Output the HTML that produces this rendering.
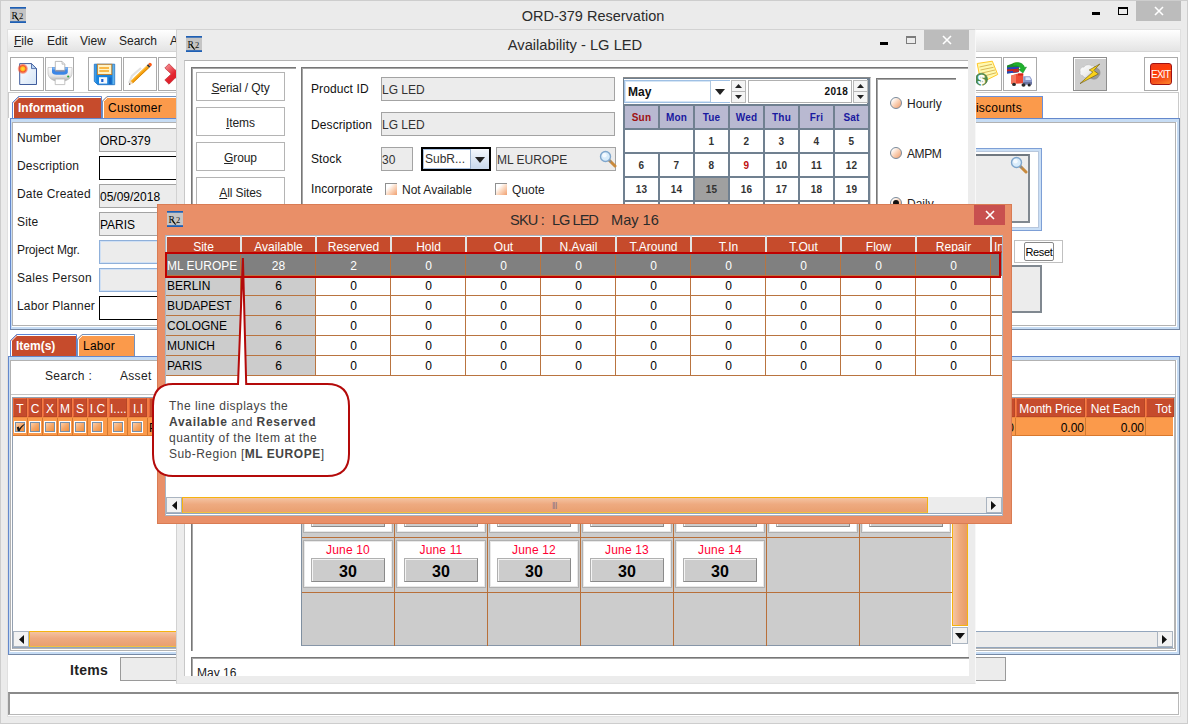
<!DOCTYPE html>
<html><head><meta charset="utf-8"><title>ORD-379 Reservation</title><style>
*{box-sizing:border-box;margin:0;padding:0}
html,body{width:1188px;height:724px;overflow:hidden}
body{background:#ececec;font-family:"Liberation Sans",sans-serif;font-size:12px;color:#000;position:relative}
.a{position:absolute}
.t{position:absolute;white-space:nowrap;line-height:14px}
.fld{position:absolute;background:#ececec;border:1px solid #a3a3a3;font-size:12px;line-height:24px;padding-left:0px;white-space:nowrap;overflow:hidden}
.fldb{position:absolute;background:#ececec;border:1px solid #8fb0da;box-shadow:inset 0 0 0 1px #d0e0f4}
.fldk{position:absolute;background:#fff;border:1px solid #000}
.tb{position:absolute;width:34px;height:34px;border:1px solid #a9a9a9;background:#fff}
.hc{position:absolute;top:0;height:17px;border-top:1px solid #fff;background:#c64b2c;color:#fff;text-align:center;font-size:12px;line-height:20px;overflow:hidden}
.cb{position:absolute;width:12px;height:12px;border:1px solid #fff;background:linear-gradient(135deg,#fdd8bc 0%,#f6a868 50%,#f08830 100%);box-shadow:inset 0 0 0 1px #7890a8}
</style></head><body>
<div class="a" id="main" style="left:0;top:0;width:1188px;height:724px;background:#ebebeb;border:1px solid #cdcdcd">
<div class="a" style="left:-1px;top:-1px;width:1188px;height:724px">
<svg class="a" style="left:10px;top:7px" width="16" height="16" viewBox="0 0 16 16"><rect width="16" height="16" fill="#c4c4c4"/><rect width="16" height="1.7" fill="#1e5fb4"/><rect y="14.2" width="16" height="1.8" fill="#1e5fb4"/><text x="1.6" y="11.6" font-family="Liberation Serif" font-size="9.5" fill="#111">R</text><path d="M4.6 8.2L8.6 13.6" stroke="#111" stroke-width="1.1"/><path d="M8.6 13.6L9.6 12.6" stroke="#345" stroke-width="0.8"/><text x="9" y="11.6" font-family="Liberation Serif" font-size="8.5" fill="#111">2</text></svg>
<div class="t" style="left:393px;top:7px;width:400px;text-align:center;font-size:14.5px;line-height:18px;color:#2b2b2b">ORD-379 Reservation</div>
<div class="a" style="left:1092px;top:12px;width:8px;height:3px;background:#000"></div>
<div class="a" style="left:1118px;top:7px;width:10px;height:8px;border:1px solid #000;border-top:2px solid #000"></div>
<div class="a" style="left:1136px;top:1px;width:45px;height:20px;background:#bcbcbc"></div>
<svg class="a" style="left:1154px;top:6px" width="10" height="10"><path d="M1 1L9 9M9 1L1 9" stroke="#fff" stroke-width="1.6"/></svg>
<div class="a" style="left:7px;top:29px;width:1174px;height:688px;background:#fff;border:1px solid #e0e0e0"></div>
<div class="a" style="left:8px;top:30px;width:1172px;height:22px;background:linear-gradient(#ffffff,#f4f4f4 40%,#e4e4e4);border-bottom:1px solid #d5d5d5"></div>
<div class="t" style="left:14px;top:34px;color:#222"><u>F</u>ile</div>
<div class="t" style="left:47px;top:34px;color:#222">Edit</div>
<div class="t" style="left:80px;top:34px;color:#222">View</div>
<div class="t" style="left:119px;top:34px;color:#222">Search</div>
<div class="t" style="left:170px;top:34px;color:#222">Accounts</div>
<div class="a" style="left:8px;top:92px;width:1171px;height:1px;background:#cacaca"></div>
<div class="a" style="left:1178px;top:92px;width:1px;height:26px;background:#cacaca"></div>
<div class="a" style="left:8px;top:92px;width:1px;height:26px;background:#cacaca"></div>
<div class="tb" style="left:10px;top:57px;width:34px;background:#fff;border-color:#ababab;overflow:hidden"><svg class="a" style="left:0;top:0" width="32" height="32" viewBox="0 0 32 32"><defs><linearGradient id="gd" x1="0" y1="0" x2="1" y2="1"><stop offset="0" stop-color="#ffffff"/><stop offset="1" stop-color="#d4e4f6"/></linearGradient><radialGradient id="gs"><stop offset="0" stop-color="#ffe23a"/><stop offset="0.4" stop-color="#ffb820"/><stop offset="0.6" stop-color="#f4502a"/><stop offset="1" stop-color="#f4502a" stop-opacity="0.25"/></radialGradient></defs><path d="M8.7 5.6H20.5L25.5 10.6V26.5H8.7Z" fill="url(#gd)" stroke="#3f5c9c"/><path d="M20.5 5.6V10.6H25.5Z" fill="#b9d4f2" stroke="#3f5c9c" stroke-width="0.8"/><circle cx="11.8" cy="10.8" r="5.2" fill="url(#gs)"/></svg></div>
<div class="tb" style="left:45px;top:57px;width:29px;background:#fff;border-color:#ababab;overflow:hidden"><svg class="a" style="left:0;top:0" width="27" height="32" viewBox="0 0 27 32"><defs><linearGradient id="gp" x1="0" y1="0" x2="0" y2="1"><stop offset="0" stop-color="#fdfdfd"/><stop offset="0.6" stop-color="#e6e6e6"/><stop offset="1" stop-color="#a8a8a8"/></linearGradient></defs><path d="M2 9.5H26V15C26 20 21 23.5 14 23.5C7 23.5 2 20 2 15Z" fill="url(#gp)" stroke="#b5b5b5" stroke-width="0.6"/><path d="M6 9.3H21.8V14C21.8 16 20 16.8 14 16.8C8 16.8 6 16 6 14Z" fill="#3c86e6"/><path d="M6.4 9.3H21.4V11.5H6.4Z" fill="#7db4f4"/><path d="M9.3 3.4H16L18.8 6.2V12.4H9.3Z" fill="#fff" stroke="#a9a9a9" stroke-width="0.8"/><path d="M16 3.4V6.2H18.8" fill="#e8e8e8" stroke="#a9a9a9" stroke-width="0.6"/><path d="M9.3 12.4H18.8V13.6H9.3Z" fill="#8d8da0"/><path d="M9.2 21H18.8V26.6H9.2Z" fill="#fff" stroke="#b5b5b5" stroke-width="0.8"/><circle cx="22.2" cy="18.5" r="1.1" fill="#2da33d"/></svg></div>
<div class="tb" style="left:88px;top:57px;width:34px;background:#fff;border-color:#ababab;overflow:hidden"><svg class="a" style="left:0;top:0" width="32" height="32" viewBox="0 0 32 32"><defs><linearGradient id="gf" x1="0" y1="0" x2="1" y2="0"><stop offset="0" stop-color="#5cb4f2"/><stop offset="0.12" stop-color="#1a86e0"/><stop offset="0.85" stop-color="#1a7fd8"/><stop offset="1" stop-color="#8ed6fa"/></linearGradient></defs><path d="M5.3 6.2H25.7V26.7H8.8L5.3 23.4Z" fill="url(#gf)" stroke="#1a6cc0" stroke-width="0.8"/><rect x="8.4" y="6.3" width="14.4" height="10.2" fill="#fff3c6" stroke="#bf8436" stroke-width="1"/><path d="M10.3 10H20M10.3 13H20" stroke="#f9a51c" stroke-width="1.5"/><rect x="10" y="19.2" width="8.2" height="6.4" fill="#f4f8fd"/><rect x="12.2" y="21" width="2.2" height="3" fill="#1c5fd0"/><rect x="20" y="19.5" width="2.5" height="6.5" fill="#1566c0"/></svg></div>
<div class="tb" style="left:123px;top:57px;width:34px;background:#fff;border-color:#ababab;overflow:hidden"><svg class="a" style="left:0;top:0" width="32" height="32" viewBox="0 0 32 32"><path d="M5 25L8 18L17 10" stroke="#cfcfcf" stroke-width="2.2" fill="none" opacity="0.6"/><path d="M6.5 22.9L22.8 7.4L25.2 9.8L8.9 25.3Z" fill="#f7a30f"/><path d="M7.2 22.9L23.4 7.5" stroke="#fcc85a" stroke-width="0.9"/><path d="M8.6 24.9L24.9 9.5" stroke="#d47f06" stroke-width="0.9"/><path d="M4.8 26.9L6.5 22.9L8.9 25.3Z" fill="#f2d6b4"/><path d="M4.8 26.9L5.5 25.1L6.6 26.2Z" fill="#444"/><path d="M22.8 7.4L24.2 6L26.6 8.4L25.2 9.8Z" fill="#3a3a3a"/><path d="M24.2 6L25.6 4.7Q27.6 4.6 28 6.9L26.6 8.4Z" fill="#ff5a14"/></svg></div>
<div class="tb" style="left:158px;top:57px;width:34px;background:#fff;border-color:#ababab;overflow:hidden"><svg class="a" style="left:0;top:0" width="32" height="32" viewBox="0 0 32 32"><defs><linearGradient id="gx" x1="0" y1="0" x2="1" y2="1"><stop offset="0" stop-color="#f7a0a4"/><stop offset="0.45" stop-color="#e4242e"/><stop offset="1" stop-color="#c8141e"/></linearGradient></defs><path d="M5.8 10L10 5.8L16.4 12.2L22.8 5.8L27 10L20.6 16L27 22L22.8 26.2L16.4 19.8L10 26.2L5.8 22L12.2 16Z" fill="url(#gx)" stroke="#c03038" stroke-width="0.7"/></svg></div>
<div class="tb" style="left:968px;top:57px;width:34px;background:#fff;border-color:#ababab;overflow:hidden"><svg class="a" style="left:0;top:0" width="32" height="32" viewBox="0 0 32 32"><path d="M8.2 5.5L23.3 3.2L28.7 16.5L18 21.8L11 20Z" fill="#fff9b0" stroke="#ffc828" stroke-width="1"/><path d="M10.5 9L23 6.3M11.5 12L24.6 9.3M13 15L26 12M15 18L27 14.8" stroke="#d9b95a" stroke-width="1"/><circle cx="12.4" cy="21.3" r="6.1" fill="#4d8c4d"/><circle cx="12.4" cy="21.3" r="6.1" fill="none" stroke="#3b733b" stroke-width="0.6"/><text x="12.4" y="25.8" font-family="Liberation Sans, sans-serif" font-weight="700" font-size="12.5" text-anchor="middle" fill="#fff" stroke="#fff" stroke-width="0.5">$</text></svg></div>
<div class="tb" style="left:1003px;top:57px;width:34px;background:#fff;border-color:#ababab;overflow:hidden"><svg class="a" style="left:0;top:0" width="32" height="32" viewBox="0 0 32 32"><path d="M3 7.5L10 5L15 6.5V14L3 15.5Z" fill="#1f8a2c"/><path d="M3 9.5L15 8.6V10.6L3 11.6Z" fill="#2a3fc0"/><path d="M3 11.6L15 10.6V12.4L3 13.6Z" fill="#d02020"/><path d="M3 13.6L15 12.4V14L3 15.5Z" fill="#2a3fc0"/><path d="M9 12L15 11.4V13.8L9 14.6Z" fill="#c02828"/><ellipse cx="12" cy="5.6" rx="2.6" ry="1.1" fill="#d8d83c"/><path d="M9 5.5C15 3 20 6 20.5 9.5L22.5 9L19 15L14.5 11.5L16.8 10.8C16 8.5 13 7.5 9 8Z" fill="#1fb02c" stroke="#148a20" stroke-width="0.5"/><path d="M7.2 17.5L14 15.6H19.2V25.2L7.2 26Z" fill="#ee4a34"/><path d="M14 15.6H19.2V17.6L14 17.5Z" fill="#d42418"/><path d="M7.2 17.5L12 16.5V25.6L7.2 26Z" fill="#f47860"/><path d="M19.2 18.2H26L28 21.5V26.5H19.2Z" fill="#8c98c8"/><path d="M21.5 19.2H25.6L27 22H21.5Z" fill="#d6e4fa"/><path d="M19.2 24H28V26.5H19.2Z" fill="#6a74a0"/><ellipse cx="10" cy="26.4" rx="1.9" ry="1.6" fill="#2a2a2a"/><ellipse cx="19.5" cy="27" rx="2" ry="1.7" fill="#2a2a2a"/><ellipse cx="25.2" cy="27" rx="1.6" ry="1.5" fill="#2a2a2a"/></svg></div>
<div class="tb" style="left:1073px;top:57px;width:34px;background:#cdcdcd;border-color:#8e8e8e;overflow:hidden;box-shadow:inset 1px 1px 0 #fff"><svg class="a" style="left:0;top:0" width="32" height="32" viewBox="0 0 32 32"><defs><linearGradient id="gc" x1="0" y1="0" x2="1" y2="1"><stop offset="0" stop-color="#ffffff"/><stop offset="0.6" stop-color="#ececec"/><stop offset="1" stop-color="#9a9a9a"/></linearGradient></defs><path d="M15 18C16 22 23 22.5 24.5 18.5C27 16.5 26.5 11.5 23.5 10.5C22 8 19 8.5 18 10Z" fill="#9a9a9a" stroke="#7c7c7c" stroke-width="0.4"/><path d="M6.3 14C5 11 8 8.5 10 9.2C11 6.5 16 6 17.5 8C20 7 21.5 9.5 20.3 11.5C21.5 14 20 17.5 17 17.5C15 21 9.5 20.5 9 17.8C6.5 17.8 5.3 15.5 6.3 14Z" fill="url(#gc)" stroke="#aaa" stroke-width="0.4"/><path d="M25.8 6L15.2 12L18.8 14L6 25.6L24.4 15.9L19.8 12.5Z" fill="#fad21a" stroke="#5a4800" stroke-width="0.55" stroke-linejoin="round"/></svg></div>
<div class="tb" style="left:1144px;top:57px;width:34px;background:#fff;border-color:#ababab;overflow:hidden"><div class="a" style="left:5px;top:5px;width:22px;height:22px;border-radius:3px;border:1px solid #a01212;background:linear-gradient(160deg,#ee3a1a 0%,#ff3c08 35%,#f4501c 70%,#ff8a2a 100%);color:#fff;font-size:10px;line-height:21px;text-align:center;letter-spacing:-0.85px;text-indent:-1px">EXIT</div></div>
<svg class="a" style="left:12px;top:96px" width="90" height="23"><path d="M0.5 23 V6.5 L6.5 0.5 H89.5 V23" fill="#c64b2c" stroke="#5f86d4"/><path d="M1.5 23 V6.9 L6.9 1.5 H89.0" fill="none" stroke="#fff"/></svg><div class="t" style="left:18px;top:101px;color:#fff;font-weight:bold;font-size:12px;">Information</div>
<svg class="a" style="left:102px;top:96px" width="80" height="23"><path d="M0.5 23 V5.0 L5.0 0.5 H79.5 V23" fill="#fb9a4b" stroke="#7391bd"/><path d="M1.5 23 V5.4 L5.4 1.5 H79.0" fill="none" stroke="#fff"/></svg><div class="t" style="left:108px;top:101px;color:#000;font-weight:normal;font-size:12px;letter-spacing:0.25px">Customer</div>
<div class="a" style="left:960px;top:96px;width:83px;height:23px;background:#fb9a4b;border-top:1px solid #6a8fd8;border-right:1px solid #6a8fd8"></div>
<div class="t" style="left:967px;top:101px;letter-spacing:0.25px">Discounts</div>
<div class="a" style="left:10px;top:118px;width:1170px;height:212px;background:#c6dcf4;border:1px solid;border-color:#6488cc #7588a4 #7588a4 #6488cc"></div>
<div class="a" style="left:12px;top:122px;width:1164px;height:204px;background:#fff;border:1px solid #b2b2b2;box-shadow:1px 0 0 #fff,0 1px 0 #fff,1px 1px 0 #fff"></div>
<div class="t" style="left:17px;top:131px;color:#1a1a1a;letter-spacing:0.2px">Number</div>
<div class="t" style="left:17px;top:159px;color:#1a1a1a;letter-spacing:0.2px">Description</div>
<div class="t" style="left:17px;top:187px;color:#1a1a1a;letter-spacing:0.2px">Date Created</div>
<div class="t" style="left:17px;top:215px;color:#1a1a1a;letter-spacing:0.2px">Site</div>
<div class="t" style="left:17px;top:243px;color:#1a1a1a;letter-spacing:-0.1px">Project Mgr.</div>
<div class="t" style="left:17px;top:271px;color:#1a1a1a;letter-spacing:0.3px">Sales Person</div>
<div class="t" style="left:17px;top:299px;color:#1a1a1a;letter-spacing:0.2px">Labor Planner</div>
<div class="fld" style="left:99px;top:128px;width:90px;height:24px;line-height:24px">ORD-379</div>
<div class="fldk" style="left:99px;top:156px;width:90px;height:24px"></div>
<div class="fld" style="left:99px;top:184px;width:90px;height:24px;line-height:24px">05/09/2018</div>
<div class="fld" style="left:99px;top:212px;width:90px;height:24px;line-height:24px">PARIS</div>
<div class="fldb" style="left:99px;top:240px;width:90px;height:24px"></div>
<div class="fldb" style="left:99px;top:268px;width:90px;height:24px"></div>
<div class="fldk" style="left:99px;top:296px;width:90px;height:24px"></div>
<div class="a" style="left:940px;top:148px;width:102px;height:83px;background:#fff;border:1px solid #7d9fd6;box-shadow:inset 0 0 0 2px #c9def5, inset 0 0 0 3px #b7c7dd"></div>
<div class="a" style="left:940px;top:154px;width:90px;height:69px;background:#ececec;border:2px solid #808890;border-top-color:#707880"></div>
<svg class="a" style="left:1010px;top:156px" width="18" height="18" viewBox="0 0 18 18"><path d="M10 10L16 16" stroke="#c98a3c" stroke-width="3" stroke-linecap="round"/><path d="M9.5 9.5L12 12" stroke="#8a8a8a" stroke-width="2"/><circle cx="6.5" cy="6.5" r="5" fill="#d8ecfb" stroke="#7fa6cc" stroke-width="1.4"/><circle cx="5.5" cy="5.3" r="2.2" fill="#f4faff"/></svg>
<div class="a" style="left:1014px;top:240px;width:49px;height:23px;background:#fff;border:1px solid #c0c0c0"></div>
<div class="a" style="left:1024px;top:242px;width:30px;height:19px;background:#fff;border:1px solid #8a8a8a;border-radius:2px;font-size:11px;line-height:18px;text-align:center;letter-spacing:-0.3px">Reset</div>
<div class="a" style="left:940px;top:265px;width:102px;height:48px;background:#ececec;border:2px solid #808890"></div>
<svg class="a" style="left:10px;top:334px" width="67" height="23"><path d="M0.5 23 V6.5 L6.5 0.5 H66.5 V23" fill="#c64b2c" stroke="#5f86d4"/><path d="M1.5 23 V6.9 L6.9 1.5 H66.0" fill="none" stroke="#fff"/></svg><div class="t" style="left:16px;top:339px;color:#fff;font-weight:bold;font-size:12px;">Item(s)</div>
<svg class="a" style="left:77px;top:334px" width="58" height="23"><path d="M0.5 23 V5.0 L5.0 0.5 H57.5 V23" fill="#fb9a4b" stroke="#7391bd"/><path d="M1.5 23 V5.4 L5.4 1.5 H57.0" fill="none" stroke="#fff"/></svg><div class="t" style="left:83px;top:339px;color:#000;font-weight:normal;font-size:12px;letter-spacing:0.25px">Labor</div>
<div class="a" style="left:8px;top:356px;width:1172px;height:299px;background:#c6dcf4;border:1px solid;border-color:#6488cc #7588a4 #7588a4 #6488cc"></div>
<div class="a" style="left:10px;top:360px;width:1166px;height:291px;background:#fff;border:1px solid #b2b2b2;box-shadow:1px 0 0 #fff,0 1px 0 #fff,1px 1px 0 #fff"></div>
<div class="a" style="left:11px;top:394px;width:1164px;height:1px;background:#c4c4c4"></div>
<div class="t" style="left:45px;top:369px;color:#222;letter-spacing:0.3px">Search :</div>
<div class="t" style="left:120px;top:369px;color:#222;letter-spacing:0.3px">Asset</div>
<div class="a" style="left:12px;top:397px;width:1163px;height:252px;background:#fff;border:1px solid #b4b4b4;border-top-color:#94a0b0;border-left-color:#94a0b0"></div>
<div class="a" style="left:13px;top:398px;width:1160px;height:19px;background:#f47a44"></div>
<div class="a" style="left:13px;top:398px;width:14px;height:19px;background:#c64b2c;border:1px solid #b84626;border-top-color:#e8683a;border-left-color:#e8683a;color:#fff;font-size:12px;line-height:21px;text-align:center;overflow:hidden;white-space:nowrap">T</div>
<div class="a" style="left:28px;top:398px;width:14px;height:19px;background:#c64b2c;border:1px solid #b84626;border-top-color:#e8683a;border-left-color:#e8683a;color:#fff;font-size:12px;line-height:21px;text-align:center;overflow:hidden;white-space:nowrap">C</div>
<div class="a" style="left:43px;top:398px;width:14px;height:19px;background:#c64b2c;border:1px solid #b84626;border-top-color:#e8683a;border-left-color:#e8683a;color:#fff;font-size:12px;line-height:21px;text-align:center;overflow:hidden;white-space:nowrap">X</div>
<div class="a" style="left:58px;top:398px;width:14px;height:19px;background:#c64b2c;border:1px solid #b84626;border-top-color:#e8683a;border-left-color:#e8683a;color:#fff;font-size:12px;line-height:21px;text-align:center;overflow:hidden;white-space:nowrap">M</div>
<div class="a" style="left:73px;top:398px;width:14px;height:19px;background:#c64b2c;border:1px solid #b84626;border-top-color:#e8683a;border-left-color:#e8683a;color:#fff;font-size:12px;line-height:21px;text-align:center;overflow:hidden;white-space:nowrap">S</div>
<div class="a" style="left:88px;top:398px;width:19px;height:19px;background:#c64b2c;border:1px solid #b84626;border-top-color:#e8683a;border-left-color:#e8683a;color:#fff;font-size:12px;line-height:21px;text-align:center;overflow:hidden;white-space:nowrap">I.C</div>
<div class="a" style="left:109px;top:398px;width:18px;height:19px;background:#c64b2c;border:1px solid #b84626;border-top-color:#e8683a;border-left-color:#e8683a;color:#fff;font-size:12px;line-height:21px;text-align:center;overflow:hidden;white-space:nowrap">I....</div>
<div class="a" style="left:129px;top:398px;width:18px;height:19px;background:#c64b2c;border:1px solid #b84626;border-top-color:#e8683a;border-left-color:#e8683a;color:#fff;font-size:12px;line-height:21px;text-align:center;overflow:hidden;white-space:nowrap">I.I</div>
<div class="a" style="left:149px;top:398px;width:30px;height:19px;background:#c64b2c;border:1px solid #b84626;border-top-color:#e8683a;border-left-color:#e8683a;color:#fff;font-size:12px;line-height:21px;text-align:center;overflow:hidden;white-space:nowrap"></div>
<div class="a" style="left:1003px;top:398px;width:12px;height:19px;background:#c64b2c;border:1px solid #b84626;border-top-color:#e8683a;border-left-color:#e8683a;color:#fff;font-size:12px;line-height:21px;text-align:center;overflow:hidden;white-space:nowrap"></div>
<div class="a" style="left:1016px;top:398px;width:69px;height:19px;background:#c64b2c;border:1px solid #b84626;border-top-color:#e8683a;border-left-color:#e8683a;color:#fff;font-size:12px;line-height:21px;text-align:center;overflow:hidden;white-space:nowrap"><span style="letter-spacing:-0.15px">Month Price</span></div>
<div class="a" style="left:1086px;top:398px;width:59px;height:19px;background:#c64b2c;border:1px solid #b84626;border-top-color:#e8683a;border-left-color:#e8683a;color:#fff;font-size:12px;line-height:21px;text-align:center;overflow:hidden;white-space:nowrap">Net Each</div>
<div class="a" style="left:1146px;top:398px;width:28px;height:19px;background:#c64b2c;border:1px solid #b84626;border-top-color:#e8683a;border-left-color:#e8683a;color:#fff;font-size:12px;line-height:21px;text-align:center;overflow:hidden;white-space:nowrap">&nbsp;&nbsp;Tot</div>
<div class="a" style="left:13px;top:417px;width:1160px;height:19px;background:#fb9a4b;border-top:1px solid #f08a40;border-bottom:1px solid #d8782e"></div>
<div class="a" style="left:27px;top:418px;width:1px;height:18px;background:#d27830"></div>
<div class="a" style="left:42px;top:418px;width:1px;height:18px;background:#d27830"></div>
<div class="a" style="left:57px;top:418px;width:1px;height:18px;background:#d27830"></div>
<div class="a" style="left:72px;top:418px;width:1px;height:18px;background:#d27830"></div>
<div class="a" style="left:87px;top:418px;width:1px;height:18px;background:#d27830"></div>
<div class="a" style="left:107px;top:418px;width:1px;height:18px;background:#d27830"></div>
<div class="a" style="left:127px;top:418px;width:1px;height:18px;background:#d27830"></div>
<div class="a" style="left:147px;top:418px;width:1px;height:18px;background:#d27830"></div>
<div class="a" style="left:1015px;top:418px;width:1px;height:18px;background:#d27830"></div>
<div class="a" style="left:1085px;top:418px;width:1px;height:18px;background:#d27830"></div>
<div class="a" style="left:1145px;top:418px;width:1px;height:18px;background:#d27830"></div>
<div class="cb" style="left:14px;top:421px"></div>
<div class="cb" style="left:29px;top:421px"></div>
<div class="cb" style="left:44px;top:421px"></div>
<div class="cb" style="left:59px;top:421px"></div>
<div class="cb" style="left:74px;top:421px"></div>
<div class="cb" style="left:91px;top:421px"></div>
<div class="cb" style="left:112px;top:421px"></div>
<div class="cb" style="left:131px;top:421px"></div>
<svg class="a" style="left:16px;top:423px" width="10" height="10" viewBox="0 0 10 10"><path d="M0.8 4.2L2.8 3.6L3.4 5.4C4.6 3.8 6.2 2.2 8.2 1L8.6 1.6C6.6 3.4 4.8 5.6 3.6 8.2L1.8 8.2Z" fill="#1a1a1a"/></svg>
<div class="t" style="left:149px;top:421px">P</div>
<div class="t" style="left:1040px;top:421px;width:44px;text-align:right">0.00</div>
<div class="t" style="left:1100px;top:421px;width:44px;text-align:right">0.00</div>
<div class="t" style="left:1004px;top:421px;width:10px;text-align:right;overflow:hidden">0</div>
<div class="a" style="left:13px;top:631px;width:1160px;height:17px;background:#ececec;border-top:1px solid #93a6bd;border-bottom:1px solid #93a6bd"></div>
<div class="a" style="left:13px;top:631px;width:16px;height:16px;background:#f2f2f2;border:1px solid #aab4c0"></div>
<svg class="a" style="left:19px;top:635px" width="5" height="9"><path d="M5 0V9L0 4.5Z" fill="#111"/></svg>
<div class="a" style="left:1157px;top:631px;width:16px;height:16px;background:#f2f2f2;border:1px solid #aab4c0"></div>
<svg class="a" style="left:1162px;top:635px" width="5" height="9"><path d="M0 0V9L5 4.5Z" fill="#111"/></svg>
<div class="a" style="left:29px;top:631px;width:933px;height:16px;border:1px solid #f5b30f;border-bottom-color:#f0c040;background:linear-gradient(#f4c3a2,#eeaa80 45%,#eaa070)"></div>
<div class="t" style="left:70px;top:662px;font-size:14px;font-weight:bold;line-height:16px;color:#222;letter-spacing:0.3px">Items</div>
<div class="a" style="left:120px;top:657px;width:886px;height:24px;background:#ececec;border:1px solid #9a9a9a"></div>
<div class="a" style="left:8px;top:692px;width:1171px;height:23px;background:#fff;border:1px solid #b8b8b8;border-top:2px solid #8a8a8a;border-left:2px solid #9a9a9a"></div>
</div></div>
<div class="a" id="avail" style="left:176px;top:29px;width:800px;height:655px;background:#ececec;border:1px solid #d2d2d2;border-right-color:#f8f8f8;border-bottom-color:#e4e4e4;overflow:hidden">
<svg class="a" style="left:9px;top:6px" width="16" height="16" viewBox="0 0 16 16"><rect width="16" height="16" fill="#c4c4c4"/><rect width="16" height="1.7" fill="#1e5fb4"/><rect y="14.2" width="16" height="1.8" fill="#1e5fb4"/><text x="1.6" y="11.6" font-family="Liberation Serif" font-size="9.5" fill="#111">R</text><path d="M4.6 8.2L8.6 13.6" stroke="#111" stroke-width="1.1"/><path d="M8.6 13.6L9.6 12.6" stroke="#345" stroke-width="0.8"/><text x="9" y="11.6" font-family="Liberation Serif" font-size="8.5" fill="#111">2</text></svg>
<div class="t" style="left:198px;top:6px;width:400px;text-align:center;font-size:14.7px;line-height:18px;color:#2b2b2b">Availability - LG LED</div>
<div class="a" style="left:703px;top:12px;width:8px;height:2.5px;background:#000"></div>
<div class="a" style="left:729px;top:6px;width:10px;height:8px;border:1px solid #7c7c7c;border-top:2px solid #7c7c7c"></div>
<div class="a" style="left:747px;top:0px;width:45px;height:20px;background:#bcbcbc"></div>
<svg class="a" style="left:765px;top:5px" width="10" height="10"><path d="M1 1L9 9M9 1L1 9" stroke="#fff" stroke-width="1.6"/></svg>
<div class="a" style="left:7px;top:30px;width:784px;height:616px;background:#fff;border-top:1px solid #b4b4b4;border-left:1px solid #c8c8c8"></div>
<div class="a" style="left:14px;top:37px;width:105px;height:584px;border-left:1px solid #777;border-top:1px solid #777;box-shadow:inset 1px 1px 0 #a6a6a6"></div>
<div class="a" style="left:19px;top:42px;width:89px;height:29px;border:1px solid #b4b4b4;background:#fff;text-align:center;font-size:12px;line-height:30px;color:#222;letter-spacing:-0.1px"><u>S</u>erial / Qty</div>
<div class="a" style="left:19px;top:77px;width:89px;height:29px;border:1px solid #b4b4b4;background:#fff;text-align:center;font-size:12px;line-height:30px;color:#222;letter-spacing:-0.1px"><u>I</u>tems</div>
<div class="a" style="left:19px;top:112px;width:89px;height:29px;border:1px solid #b4b4b4;background:#fff;text-align:center;font-size:12px;line-height:30px;color:#222;letter-spacing:-0.1px"><u>G</u>roup</div>
<div class="a" style="left:19px;top:147px;width:89px;height:29px;border:1px solid #b4b4b4;background:#fff;text-align:center;font-size:12px;line-height:30px;color:#222;letter-spacing:-0.1px"><u>A</u>ll Sites</div>
<div class="a" style="left:124px;top:37px;width:667px;height:578px;border-left:1px solid #777;border-top:1px solid #777;box-shadow:inset 1px 1px 0 #a6a6a6"></div>
<div class="t" style="left:134px;top:52px;color:#111;letter-spacing:0.1px">Product ID</div>
<div class="t" style="left:134px;top:88px;color:#111;letter-spacing:0.1px">Description</div>
<div class="t" style="left:134px;top:122px;color:#111;letter-spacing:0.1px">Stock</div>
<div class="t" style="left:134px;top:152px;color:#111;letter-spacing:0.1px">Incorporate</div>
<div class="fld" style="left:204px;top:47px;width:234px;height:24px;color:#333">LG LED</div>
<div class="fld" style="left:204px;top:82px;width:234px;height:24px;color:#333">LG LED</div>
<div class="fld" style="left:204px;top:117px;width:32px;height:24px;color:#333">30</div>
<div class="a" style="left:244px;top:117px;width:70px;height:24px;border:2px solid #000;background:#fff;box-shadow:inset 0 0 0 1px #a8c0e0;font-size:12px;line-height:21px;padding-left:2px;color:#333">SubR...</div>
<div class="a" style="left:293px;top:119px;width:19px;height:20px;background:linear-gradient(#f4f8fd,#c8d8ec);border-left:1px solid #9ab0cc"></div>
<svg class="a" style="left:298px;top:127px" width="10" height="6"><path d="M0 0H10L5 6Z" fill="#222"/></svg>
<div class="fld" style="left:319px;top:117px;width:120px;height:24px;color:#333">ML EUROPE</div>
<svg class="a" style="left:422px;top:120px" width="18" height="18" viewBox="0 0 18 18"><path d="M10 10L16 16" stroke="#c98a3c" stroke-width="3" stroke-linecap="round"/><path d="M9.5 9.5L12 12" stroke="#8a8a8a" stroke-width="2"/><circle cx="6.5" cy="6.5" r="5" fill="#d8ecfb" stroke="#7fa6cc" stroke-width="1.4"/><circle cx="5.5" cy="5.3" r="2.2" fill="#f4faff"/></svg>
<div class="a" style="left:208px;top:153px;width:12px;height:12px;background:linear-gradient(135deg,#ffffff 25%,#fbd8c0 55%,#f0a070 100%);border-top:1px solid #909090;border-left:1px solid #909090"></div>
<div class="a" style="left:318px;top:153px;width:12px;height:12px;background:linear-gradient(135deg,#ffffff 25%,#fbd8c0 55%,#f0a070 100%);border-top:1px solid #909090;border-left:1px solid #909090"></div>
<div class="t" style="left:225px;top:153px;color:#222">Not Available</div>
<div class="t" style="left:335px;top:153px;color:#222">Quote</div>
<div class="a" style="left:446px;top:47px;width:248px;height:130px;background:#708090;border-right:1px solid #d4d4d4;border-top:1px solid #8a8a8a"></div>
<div class="a" style="left:447px;top:49px;width:243px;height:25px;background:#fff"></div>
<div class="a" style="left:447px;top:50px;width:106px;height:23px;border:1px solid #9fc0e4;box-shadow:inset 0 0 0 1px #d5e5f5;background:#fff;font-weight:bold;font-size:12px;line-height:22px;padding-left:3px;color:#111">May</div>
<div class="a" style="left:533px;top:51px;width:20px;height:21px;background:#fff;border-left:1px solid #b0c8e0"></div>
<svg class="a" style="left:538px;top:59px" width="10" height="6"><path d="M0 0H10L5 6Z" fill="#222"/></svg>
<div class="a" style="left:554px;top:50px;width:15px;height:12px;background:#f4f4f4;border:1px solid #b8b8b8"></div>
<div class="a" style="left:554px;top:61px;width:15px;height:12px;background:#f4f4f4;border:1px solid #b8b8b8"></div>
<svg class="a" style="left:558px;top:54px" width="7" height="4"><path d="M0 4H7L3.5 0Z" fill="#222"/></svg>
<svg class="a" style="left:558px;top:65px" width="7" height="4"><path d="M0 0H7L3.5 4Z" fill="#222"/></svg>
<div class="a" style="left:571px;top:50px;width:104px;height:23px;border:1px solid #b0b0b0;background:#fff;font-weight:bold;font-size:10px;line-height:22px;text-align:right;padding-right:3px;letter-spacing:0.3px;color:#111">2018</div>
<div class="a" style="left:676px;top:50px;width:15px;height:12px;background:#f4f4f4;border:1px solid #b8b8b8"></div>
<div class="a" style="left:676px;top:61px;width:15px;height:12px;background:#f4f4f4;border:1px solid #b8b8b8"></div>
<svg class="a" style="left:680px;top:54px" width="7" height="4"><path d="M0 4H7L3.5 0Z" fill="#222"/></svg>
<svg class="a" style="left:680px;top:65px" width="7" height="4"><path d="M0 0H7L3.5 4Z" fill="#222"/></svg>
<div class="a" style="left:448px;top:76px;width:33px;height:22px;background:#b9b9d1;color:#a01010;font-weight:bold;font-size:10px;line-height:23px;text-align:center;letter-spacing:0.2px">Sun</div>
<div class="a" style="left:483px;top:76px;width:33px;height:22px;background:#b9b9d1;color:#1a1aa0;font-weight:bold;font-size:10px;line-height:23px;text-align:center;letter-spacing:0.2px">Mon</div>
<div class="a" style="left:518px;top:76px;width:33px;height:22px;background:#b9b9d1;color:#1a1aa0;font-weight:bold;font-size:10px;line-height:23px;text-align:center;letter-spacing:0.2px">Tue</div>
<div class="a" style="left:553px;top:76px;width:33px;height:22px;background:#b9b9d1;color:#1a1aa0;font-weight:bold;font-size:10px;line-height:23px;text-align:center;letter-spacing:0.2px">Wed</div>
<div class="a" style="left:588px;top:76px;width:33px;height:22px;background:#b9b9d1;color:#1a1aa0;font-weight:bold;font-size:10px;line-height:23px;text-align:center;letter-spacing:0.2px">Thu</div>
<div class="a" style="left:623px;top:76px;width:33px;height:22px;background:#b9b9d1;color:#1a1aa0;font-weight:bold;font-size:10px;line-height:23px;text-align:center;letter-spacing:0.2px">Fri</div>
<div class="a" style="left:658px;top:76px;width:33px;height:22px;background:#b9b9d1;color:#1a1aa0;font-weight:bold;font-size:10px;line-height:23px;text-align:center;letter-spacing:0.2px">Sat</div>
<div class="a" style="left:448px;top:100px;width:68px;height:22px;background:#fff"></div>
<div class="a" style="left:518px;top:100px;width:33px;height:22px;background:#fff;color:#333;font-weight:bold;font-size:10px;line-height:23px;text-align:center;letter-spacing:0.3px">1</div>
<div class="a" style="left:553px;top:100px;width:33px;height:22px;background:#fff;color:#333;font-weight:bold;font-size:10px;line-height:23px;text-align:center;letter-spacing:0.3px">2</div>
<div class="a" style="left:588px;top:100px;width:33px;height:22px;background:#fff;color:#333;font-weight:bold;font-size:10px;line-height:23px;text-align:center;letter-spacing:0.3px">3</div>
<div class="a" style="left:623px;top:100px;width:33px;height:22px;background:#fff;color:#333;font-weight:bold;font-size:10px;line-height:23px;text-align:center;letter-spacing:0.3px">4</div>
<div class="a" style="left:658px;top:100px;width:33px;height:22px;background:#fff;color:#333;font-weight:bold;font-size:10px;line-height:23px;text-align:center;letter-spacing:0.3px">5</div>
<div class="a" style="left:448px;top:124px;width:33px;height:22px;background:#fff;color:#333;font-weight:bold;font-size:10px;line-height:23px;text-align:center;letter-spacing:0.3px">6</div>
<div class="a" style="left:483px;top:124px;width:33px;height:22px;background:#fff;color:#333;font-weight:bold;font-size:10px;line-height:23px;text-align:center;letter-spacing:0.3px">7</div>
<div class="a" style="left:518px;top:124px;width:33px;height:22px;background:#fff;color:#333;font-weight:bold;font-size:10px;line-height:23px;text-align:center;letter-spacing:0.3px">8</div>
<div class="a" style="left:553px;top:124px;width:33px;height:22px;background:#fff;color:#c01010;font-weight:bold;font-size:10px;line-height:23px;text-align:center;letter-spacing:0.3px">9</div>
<div class="a" style="left:588px;top:124px;width:33px;height:22px;background:#fff;color:#333;font-weight:bold;font-size:10px;line-height:23px;text-align:center;letter-spacing:0.3px">10</div>
<div class="a" style="left:623px;top:124px;width:33px;height:22px;background:#fff;color:#333;font-weight:bold;font-size:10px;line-height:23px;text-align:center;letter-spacing:0.3px">11</div>
<div class="a" style="left:658px;top:124px;width:33px;height:22px;background:#fff;color:#333;font-weight:bold;font-size:10px;line-height:23px;text-align:center;letter-spacing:0.3px">12</div>
<div class="a" style="left:448px;top:148px;width:33px;height:22px;background:#fff;color:#333;font-weight:bold;font-size:10px;line-height:23px;text-align:center;letter-spacing:0.3px">13</div>
<div class="a" style="left:483px;top:148px;width:33px;height:22px;background:#fff;color:#333;font-weight:bold;font-size:10px;line-height:23px;text-align:center;letter-spacing:0.3px">14</div>
<div class="a" style="left:518px;top:148px;width:33px;height:22px;background:#a0a0a0;color:#333;font-weight:bold;font-size:10px;line-height:23px;text-align:center;letter-spacing:0.3px">15</div>
<div class="a" style="left:553px;top:148px;width:33px;height:22px;background:#fff;color:#333;font-weight:bold;font-size:10px;line-height:23px;text-align:center;letter-spacing:0.3px">16</div>
<div class="a" style="left:588px;top:148px;width:33px;height:22px;background:#fff;color:#333;font-weight:bold;font-size:10px;line-height:23px;text-align:center;letter-spacing:0.3px">17</div>
<div class="a" style="left:623px;top:148px;width:33px;height:22px;background:#fff;color:#333;font-weight:bold;font-size:10px;line-height:23px;text-align:center;letter-spacing:0.3px">18</div>
<div class="a" style="left:658px;top:148px;width:33px;height:22px;background:#fff;color:#333;font-weight:bold;font-size:10px;line-height:23px;text-align:center;letter-spacing:0.3px">19</div>
<div class="a" style="left:448px;top:172px;width:33px;height:22px;background:#fff;color:#333;font-weight:bold;font-size:10px;line-height:23px;text-align:center;letter-spacing:0.3px">20</div>
<div class="a" style="left:483px;top:172px;width:33px;height:22px;background:#fff;color:#333;font-weight:bold;font-size:10px;line-height:23px;text-align:center;letter-spacing:0.3px">21</div>
<div class="a" style="left:518px;top:172px;width:33px;height:22px;background:#fff;color:#333;font-weight:bold;font-size:10px;line-height:23px;text-align:center;letter-spacing:0.3px">22</div>
<div class="a" style="left:553px;top:172px;width:33px;height:22px;background:#fff;color:#333;font-weight:bold;font-size:10px;line-height:23px;text-align:center;letter-spacing:0.3px">23</div>
<div class="a" style="left:588px;top:172px;width:33px;height:22px;background:#fff;color:#333;font-weight:bold;font-size:10px;line-height:23px;text-align:center;letter-spacing:0.3px">24</div>
<div class="a" style="left:623px;top:172px;width:33px;height:22px;background:#fff;color:#333;font-weight:bold;font-size:10px;line-height:23px;text-align:center;letter-spacing:0.3px">25</div>
<div class="a" style="left:658px;top:172px;width:33px;height:22px;background:#fff;color:#333;font-weight:bold;font-size:10px;line-height:23px;text-align:center;letter-spacing:0.3px">26</div>
<div class="a" style="left:699px;top:48px;width:80px;height:140px;border-left:1px solid #777;border-top:1px solid #777;box-shadow:inset 1px 1px 0 #a6a6a6"></div>
<div class="a" style="left:713px;top:67px;width:12px;height:12px;border-radius:6px;border:1px solid #7a8a9a;background:linear-gradient(135deg,#ffffff 15%,#fbd4ba 50%,#f0a070 95%)"></div>
<div class="t" style="left:730px;top:67px;color:#222;">Hourly</div>
<div class="a" style="left:713px;top:117px;width:12px;height:12px;border-radius:6px;border:1px solid #7a8a9a;background:linear-gradient(135deg,#ffffff 15%,#fbd4ba 50%,#f0a070 95%)"></div>
<div class="t" style="left:730px;top:117px;color:#222;letter-spacing:-0.4px">AMPM</div>
<div class="a" style="left:713px;top:167px;width:12px;height:12px;border-radius:6px;border:1px solid #7a8a9a;background:linear-gradient(135deg,#ffffff 15%,#fbd4ba 50%,#f0a070 95%)"></div>
<div class="a" style="left:716px;top:170px;width:6px;height:6px;border-radius:3px;background:#111"></div>
<div class="t" style="left:730px;top:167px;color:#222;">Daily</div>
<div class="a" style="left:124px;top:450px;width:650px;height:166px;background:#cccccc;border-left:1px solid #7f8fa0;border-bottom:1px solid #8796a8"></div>
<div class="a" style="left:125px;top:507px;width:650px;height:1px;background:#b8703a"></div>
<div class="a" style="left:125px;top:562px;width:650px;height:1px;background:#b8703a"></div>
<div class="a" style="left:217px;top:450px;width:1px;height:166px;background:#b8703a"></div>
<div class="a" style="left:310px;top:450px;width:1px;height:166px;background:#b8703a"></div>
<div class="a" style="left:403px;top:450px;width:1px;height:166px;background:#b8703a"></div>
<div class="a" style="left:496px;top:450px;width:1px;height:166px;background:#b8703a"></div>
<div class="a" style="left:589px;top:450px;width:1px;height:166px;background:#b8703a"></div>
<div class="a" style="left:682px;top:450px;width:1px;height:166px;background:#b8703a"></div>
<div class="a" style="left:126px;top:455px;width:90px;height:48px;background:#fff;border:1px solid #b0b0b0;box-shadow:inset 0 0 0 1px #e8e8e8"></div>
<div class="a" style="left:134px;top:473px;width:74px;height:24px;background:#cccccc;border:1px solid #8a8a8a;border-top-color:#b0b0b0;border-left-color:#b0b0b0;box-shadow:inset 1px 1px 0 #f4f4f4;font-weight:bold;font-size:16px;line-height:25px;text-align:center;color:#000">30</div>
<div class="a" style="left:219px;top:455px;width:90px;height:48px;background:#fff;border:1px solid #b0b0b0;box-shadow:inset 0 0 0 1px #e8e8e8"></div>
<div class="a" style="left:227px;top:473px;width:74px;height:24px;background:#cccccc;border:1px solid #8a8a8a;border-top-color:#b0b0b0;border-left-color:#b0b0b0;box-shadow:inset 1px 1px 0 #f4f4f4;font-weight:bold;font-size:16px;line-height:25px;text-align:center;color:#000">30</div>
<div class="a" style="left:312px;top:455px;width:90px;height:48px;background:#fff;border:1px solid #b0b0b0;box-shadow:inset 0 0 0 1px #e8e8e8"></div>
<div class="a" style="left:320px;top:473px;width:74px;height:24px;background:#cccccc;border:1px solid #8a8a8a;border-top-color:#b0b0b0;border-left-color:#b0b0b0;box-shadow:inset 1px 1px 0 #f4f4f4;font-weight:bold;font-size:16px;line-height:25px;text-align:center;color:#000">30</div>
<div class="a" style="left:405px;top:455px;width:90px;height:48px;background:#fff;border:1px solid #b0b0b0;box-shadow:inset 0 0 0 1px #e8e8e8"></div>
<div class="a" style="left:413px;top:473px;width:74px;height:24px;background:#cccccc;border:1px solid #8a8a8a;border-top-color:#b0b0b0;border-left-color:#b0b0b0;box-shadow:inset 1px 1px 0 #f4f4f4;font-weight:bold;font-size:16px;line-height:25px;text-align:center;color:#000">30</div>
<div class="a" style="left:498px;top:455px;width:90px;height:48px;background:#fff;border:1px solid #b0b0b0;box-shadow:inset 0 0 0 1px #e8e8e8"></div>
<div class="a" style="left:506px;top:473px;width:74px;height:24px;background:#cccccc;border:1px solid #8a8a8a;border-top-color:#b0b0b0;border-left-color:#b0b0b0;box-shadow:inset 1px 1px 0 #f4f4f4;font-weight:bold;font-size:16px;line-height:25px;text-align:center;color:#000">30</div>
<div class="a" style="left:591px;top:455px;width:90px;height:48px;background:#fff;border:1px solid #b0b0b0;box-shadow:inset 0 0 0 1px #e8e8e8"></div>
<div class="a" style="left:599px;top:473px;width:74px;height:24px;background:#cccccc;border:1px solid #8a8a8a;border-top-color:#b0b0b0;border-left-color:#b0b0b0;box-shadow:inset 1px 1px 0 #f4f4f4;font-weight:bold;font-size:16px;line-height:25px;text-align:center;color:#000">30</div>
<div class="a" style="left:684px;top:455px;width:90px;height:48px;background:#fff;border:1px solid #b0b0b0;box-shadow:inset 0 0 0 1px #e8e8e8"></div>
<div class="a" style="left:692px;top:473px;width:74px;height:24px;background:#cccccc;border:1px solid #8a8a8a;border-top-color:#b0b0b0;border-left-color:#b0b0b0;box-shadow:inset 1px 1px 0 #f4f4f4;font-weight:bold;font-size:16px;line-height:25px;text-align:center;color:#000">30</div>
<div class="a" style="left:126px;top:510px;width:90px;height:48px;background:#fff;border:1px solid #b0b0b0;box-shadow:inset 0 0 0 1px #e8e8e8"></div>
<div class="t" style="left:126px;top:513px;width:90px;text-align:center;color:#ff0033;font-size:12px;line-height:15px;letter-spacing:0.15px">June 10</div>
<div class="a" style="left:134px;top:528px;width:74px;height:24px;background:#cccccc;border:1px solid #8a8a8a;border-top-color:#b0b0b0;border-left-color:#b0b0b0;box-shadow:inset 1px 1px 0 #f4f4f4;font-weight:bold;font-size:16px;line-height:25px;text-align:center;color:#000">30</div>
<div class="a" style="left:219px;top:510px;width:90px;height:48px;background:#fff;border:1px solid #b0b0b0;box-shadow:inset 0 0 0 1px #e8e8e8"></div>
<div class="t" style="left:219px;top:513px;width:90px;text-align:center;color:#ff0033;font-size:12px;line-height:15px;letter-spacing:0.15px">June 11</div>
<div class="a" style="left:227px;top:528px;width:74px;height:24px;background:#cccccc;border:1px solid #8a8a8a;border-top-color:#b0b0b0;border-left-color:#b0b0b0;box-shadow:inset 1px 1px 0 #f4f4f4;font-weight:bold;font-size:16px;line-height:25px;text-align:center;color:#000">30</div>
<div class="a" style="left:312px;top:510px;width:90px;height:48px;background:#fff;border:1px solid #b0b0b0;box-shadow:inset 0 0 0 1px #e8e8e8"></div>
<div class="t" style="left:312px;top:513px;width:90px;text-align:center;color:#ff0033;font-size:12px;line-height:15px;letter-spacing:0.15px">June 12</div>
<div class="a" style="left:320px;top:528px;width:74px;height:24px;background:#cccccc;border:1px solid #8a8a8a;border-top-color:#b0b0b0;border-left-color:#b0b0b0;box-shadow:inset 1px 1px 0 #f4f4f4;font-weight:bold;font-size:16px;line-height:25px;text-align:center;color:#000">30</div>
<div class="a" style="left:405px;top:510px;width:90px;height:48px;background:#fff;border:1px solid #b0b0b0;box-shadow:inset 0 0 0 1px #e8e8e8"></div>
<div class="t" style="left:405px;top:513px;width:90px;text-align:center;color:#ff0033;font-size:12px;line-height:15px;letter-spacing:0.15px">June 13</div>
<div class="a" style="left:413px;top:528px;width:74px;height:24px;background:#cccccc;border:1px solid #8a8a8a;border-top-color:#b0b0b0;border-left-color:#b0b0b0;box-shadow:inset 1px 1px 0 #f4f4f4;font-weight:bold;font-size:16px;line-height:25px;text-align:center;color:#000">30</div>
<div class="a" style="left:498px;top:510px;width:90px;height:48px;background:#fff;border:1px solid #b0b0b0;box-shadow:inset 0 0 0 1px #e8e8e8"></div>
<div class="t" style="left:498px;top:513px;width:90px;text-align:center;color:#ff0033;font-size:12px;line-height:15px;letter-spacing:0.15px">June 14</div>
<div class="a" style="left:506px;top:528px;width:74px;height:24px;background:#cccccc;border:1px solid #8a8a8a;border-top-color:#b0b0b0;border-left-color:#b0b0b0;box-shadow:inset 1px 1px 0 #f4f4f4;font-weight:bold;font-size:16px;line-height:25px;text-align:center;color:#000">30</div>
<div class="a" style="left:775px;top:176px;width:16px;height:420px;background:linear-gradient(90deg,#f6c6a4,#eeaa7c 50%,#e89c68);border:1px solid #f5b30f"></div>
<div class="a" style="left:775px;top:597px;width:16px;height:17px;background:#f2f2f2;border:1px solid #aab4c0"></div>
<svg class="a" style="left:778px;top:603px" width="10" height="6"><path d="M0 0H10L5 6Z" fill="#111"/></svg>
<div class="a" style="left:775px;top:614px;width:16px;height:2px;background:#fff"></div>
<div class="a" style="left:14px;top:627px;width:778px;height:25px;background:#fff;border-top:1px solid #777;border-left:1px solid #777;box-shadow:inset 1px 1px 0 #a6a6a6"></div>
<div class="t" style="left:20px;top:636px;color:#222">May 16</div>
<div class="a" style="left:0px;top:646px;width:800px;height:10px;background:#ececec"></div>
</div>
<div class="a" id="sku" style="left:157px;top:204px;width:855px;height:320px;background:#e98f68;border:1px solid #d97c54;overflow:hidden">
<svg class="a" style="left:9px;top:6px" width="16" height="16" viewBox="0 0 16 16"><rect width="16" height="16" fill="#c4c4c4"/><rect width="16" height="1.7" fill="#1e5fb4"/><rect y="14.2" width="16" height="1.8" fill="#1e5fb4"/><text x="1.6" y="11.6" font-family="Liberation Serif" font-size="9.5" fill="#111">R</text><path d="M4.6 8.2L8.6 13.6" stroke="#111" stroke-width="1.1"/><path d="M8.6 13.6L9.6 12.6" stroke="#345" stroke-width="0.8"/><text x="9" y="11.6" font-family="Liberation Serif" font-size="8.5" fill="#111">2</text></svg>
<div class="t" style="left:352px;top:6px;font-size:14.6px;line-height:18px;color:#2b2b2b;letter-spacing:-0.8px">SKU :</div>
<div class="t" style="left:394px;top:6px;font-size:14.6px;line-height:18px;color:#2b2b2b;letter-spacing:-1.0px">LG LED</div>
<div class="t" style="left:453px;top:6px;font-size:14.6px;line-height:18px;color:#2b2b2b;letter-spacing:0.0px">May 16</div>
<div class="a" style="left:816px;top:0px;width:31px;height:20px;background:#c8504f"></div>
<svg class="a" style="left:827px;top:5px" width="10" height="10"><path d="M1 1L9 9M9 1L1 9" stroke="#fff" stroke-width="1.6"/></svg>
<div class="a" style="left:7px;top:30px;width:838px;height:281px;background:#fff;border:1px solid #a9b4c2"></div>
<div class="a" style="left:8px;top:31px;width:836px;height:17px;background:#e4e4e4"></div>
<div class="hc" style="left:9px;top:31px;width:73px;text-align:center;">Site</div>
<div class="hc" style="left:84px;top:31px;width:73px;text-align:center;">Available</div>
<div class="hc" style="left:159px;top:31px;width:73px;text-align:center;">Reserved</div>
<div class="hc" style="left:234px;top:31px;width:73px;text-align:center;">Hold</div>
<div class="hc" style="left:309px;top:31px;width:73px;text-align:center;">Out</div>
<div class="hc" style="left:384px;top:31px;width:73px;text-align:center;">N.Avail</div>
<div class="hc" style="left:459px;top:31px;width:73px;text-align:center;">T.Around</div>
<div class="hc" style="left:534px;top:31px;width:73px;text-align:center;">T.In</div>
<div class="hc" style="left:609px;top:31px;width:73px;text-align:center;">T.Out</div>
<div class="hc" style="left:684px;top:31px;width:73px;text-align:center;">Flow</div>
<div class="hc" style="left:759px;top:31px;width:73px;text-align:center;">Repair</div>
<div class="hc" style="left:834px;top:31px;width:10px;text-align:left;padding-left:2px">In</div>
<div class="a" style="left:8px;top:48px;width:836px;height:22px;background:#808080"></div>
<div class="t" style="left:9px;top:53px;color:#fff;font-size:12px;line-height:16px">ML EUROPE</div>
<div class="t" style="left:83px;top:53px;width:75px;text-align:center;color:#fff;font-size:12px;line-height:16px">28</div>
<div class="t" style="left:158px;top:53px;width:75px;text-align:center;color:#fff;font-size:12px;line-height:16px">2</div>
<div class="t" style="left:233px;top:53px;width:75px;text-align:center;color:#fff;font-size:12px;line-height:16px">0</div>
<div class="t" style="left:308px;top:53px;width:75px;text-align:center;color:#fff;font-size:12px;line-height:16px">0</div>
<div class="t" style="left:383px;top:53px;width:75px;text-align:center;color:#fff;font-size:12px;line-height:16px">0</div>
<div class="t" style="left:458px;top:53px;width:75px;text-align:center;color:#fff;font-size:12px;line-height:16px">0</div>
<div class="t" style="left:533px;top:53px;width:75px;text-align:center;color:#fff;font-size:12px;line-height:16px">0</div>
<div class="t" style="left:608px;top:53px;width:75px;text-align:center;color:#fff;font-size:12px;line-height:16px">0</div>
<div class="t" style="left:683px;top:53px;width:75px;text-align:center;color:#fff;font-size:12px;line-height:16px">0</div>
<div class="t" style="left:758px;top:53px;width:75px;text-align:center;color:#fff;font-size:12px;line-height:16px">0</div>
<div class="t" style="left:833px;top:53px;width:75px;text-align:center;color:#fff;font-size:12px;line-height:16px">0</div>
<div class="a" style="left:8px;top:70px;width:836px;height:1px;background:#b97440"></div>
<div class="a" style="left:8px;top:71px;width:149px;height:19px;background:#cccccc"></div>
<div class="t" style="left:9px;top:73px;color:#000;font-size:12px;line-height:16px">BERLIN</div>
<div class="t" style="left:83px;top:73px;width:75px;text-align:center;color:#000;font-size:12px;line-height:16px">6</div>
<div class="t" style="left:158px;top:73px;width:75px;text-align:center;color:#000;font-size:12px;line-height:16px">0</div>
<div class="t" style="left:233px;top:73px;width:75px;text-align:center;color:#000;font-size:12px;line-height:16px">0</div>
<div class="t" style="left:308px;top:73px;width:75px;text-align:center;color:#000;font-size:12px;line-height:16px">0</div>
<div class="t" style="left:383px;top:73px;width:75px;text-align:center;color:#000;font-size:12px;line-height:16px">0</div>
<div class="t" style="left:458px;top:73px;width:75px;text-align:center;color:#000;font-size:12px;line-height:16px">0</div>
<div class="t" style="left:533px;top:73px;width:75px;text-align:center;color:#000;font-size:12px;line-height:16px">0</div>
<div class="t" style="left:608px;top:73px;width:75px;text-align:center;color:#000;font-size:12px;line-height:16px">0</div>
<div class="t" style="left:683px;top:73px;width:75px;text-align:center;color:#000;font-size:12px;line-height:16px">0</div>
<div class="t" style="left:758px;top:73px;width:75px;text-align:center;color:#000;font-size:12px;line-height:16px">0</div>
<div class="t" style="left:833px;top:73px;width:75px;text-align:center;color:#000;font-size:12px;line-height:16px">0</div>
<div class="a" style="left:8px;top:90px;width:836px;height:1px;background:#b97440"></div>
<div class="a" style="left:8px;top:91px;width:149px;height:19px;background:#cccccc"></div>
<div class="t" style="left:9px;top:93px;color:#000;font-size:12px;line-height:16px">BUDAPEST</div>
<div class="t" style="left:83px;top:93px;width:75px;text-align:center;color:#000;font-size:12px;line-height:16px">6</div>
<div class="t" style="left:158px;top:93px;width:75px;text-align:center;color:#000;font-size:12px;line-height:16px">0</div>
<div class="t" style="left:233px;top:93px;width:75px;text-align:center;color:#000;font-size:12px;line-height:16px">0</div>
<div class="t" style="left:308px;top:93px;width:75px;text-align:center;color:#000;font-size:12px;line-height:16px">0</div>
<div class="t" style="left:383px;top:93px;width:75px;text-align:center;color:#000;font-size:12px;line-height:16px">0</div>
<div class="t" style="left:458px;top:93px;width:75px;text-align:center;color:#000;font-size:12px;line-height:16px">0</div>
<div class="t" style="left:533px;top:93px;width:75px;text-align:center;color:#000;font-size:12px;line-height:16px">0</div>
<div class="t" style="left:608px;top:93px;width:75px;text-align:center;color:#000;font-size:12px;line-height:16px">0</div>
<div class="t" style="left:683px;top:93px;width:75px;text-align:center;color:#000;font-size:12px;line-height:16px">0</div>
<div class="t" style="left:758px;top:93px;width:75px;text-align:center;color:#000;font-size:12px;line-height:16px">0</div>
<div class="t" style="left:833px;top:93px;width:75px;text-align:center;color:#000;font-size:12px;line-height:16px">0</div>
<div class="a" style="left:8px;top:110px;width:836px;height:1px;background:#b97440"></div>
<div class="a" style="left:8px;top:111px;width:149px;height:19px;background:#cccccc"></div>
<div class="t" style="left:9px;top:113px;color:#000;font-size:12px;line-height:16px">COLOGNE</div>
<div class="t" style="left:83px;top:113px;width:75px;text-align:center;color:#000;font-size:12px;line-height:16px">6</div>
<div class="t" style="left:158px;top:113px;width:75px;text-align:center;color:#000;font-size:12px;line-height:16px">0</div>
<div class="t" style="left:233px;top:113px;width:75px;text-align:center;color:#000;font-size:12px;line-height:16px">0</div>
<div class="t" style="left:308px;top:113px;width:75px;text-align:center;color:#000;font-size:12px;line-height:16px">0</div>
<div class="t" style="left:383px;top:113px;width:75px;text-align:center;color:#000;font-size:12px;line-height:16px">0</div>
<div class="t" style="left:458px;top:113px;width:75px;text-align:center;color:#000;font-size:12px;line-height:16px">0</div>
<div class="t" style="left:533px;top:113px;width:75px;text-align:center;color:#000;font-size:12px;line-height:16px">0</div>
<div class="t" style="left:608px;top:113px;width:75px;text-align:center;color:#000;font-size:12px;line-height:16px">0</div>
<div class="t" style="left:683px;top:113px;width:75px;text-align:center;color:#000;font-size:12px;line-height:16px">0</div>
<div class="t" style="left:758px;top:113px;width:75px;text-align:center;color:#000;font-size:12px;line-height:16px">0</div>
<div class="t" style="left:833px;top:113px;width:75px;text-align:center;color:#000;font-size:12px;line-height:16px">0</div>
<div class="a" style="left:8px;top:130px;width:836px;height:1px;background:#b97440"></div>
<div class="a" style="left:8px;top:131px;width:149px;height:19px;background:#cccccc"></div>
<div class="t" style="left:9px;top:133px;color:#000;font-size:12px;line-height:16px">MUNICH</div>
<div class="t" style="left:83px;top:133px;width:75px;text-align:center;color:#000;font-size:12px;line-height:16px">6</div>
<div class="t" style="left:158px;top:133px;width:75px;text-align:center;color:#000;font-size:12px;line-height:16px">0</div>
<div class="t" style="left:233px;top:133px;width:75px;text-align:center;color:#000;font-size:12px;line-height:16px">0</div>
<div class="t" style="left:308px;top:133px;width:75px;text-align:center;color:#000;font-size:12px;line-height:16px">0</div>
<div class="t" style="left:383px;top:133px;width:75px;text-align:center;color:#000;font-size:12px;line-height:16px">0</div>
<div class="t" style="left:458px;top:133px;width:75px;text-align:center;color:#000;font-size:12px;line-height:16px">0</div>
<div class="t" style="left:533px;top:133px;width:75px;text-align:center;color:#000;font-size:12px;line-height:16px">0</div>
<div class="t" style="left:608px;top:133px;width:75px;text-align:center;color:#000;font-size:12px;line-height:16px">0</div>
<div class="t" style="left:683px;top:133px;width:75px;text-align:center;color:#000;font-size:12px;line-height:16px">0</div>
<div class="t" style="left:758px;top:133px;width:75px;text-align:center;color:#000;font-size:12px;line-height:16px">0</div>
<div class="t" style="left:833px;top:133px;width:75px;text-align:center;color:#000;font-size:12px;line-height:16px">0</div>
<div class="a" style="left:8px;top:150px;width:836px;height:1px;background:#b97440"></div>
<div class="a" style="left:8px;top:151px;width:149px;height:19px;background:#cccccc"></div>
<div class="t" style="left:9px;top:153px;color:#000;font-size:12px;line-height:16px">PARIS</div>
<div class="t" style="left:83px;top:153px;width:75px;text-align:center;color:#000;font-size:12px;line-height:16px">6</div>
<div class="t" style="left:158px;top:153px;width:75px;text-align:center;color:#000;font-size:12px;line-height:16px">0</div>
<div class="t" style="left:233px;top:153px;width:75px;text-align:center;color:#000;font-size:12px;line-height:16px">0</div>
<div class="t" style="left:308px;top:153px;width:75px;text-align:center;color:#000;font-size:12px;line-height:16px">0</div>
<div class="t" style="left:383px;top:153px;width:75px;text-align:center;color:#000;font-size:12px;line-height:16px">0</div>
<div class="t" style="left:458px;top:153px;width:75px;text-align:center;color:#000;font-size:12px;line-height:16px">0</div>
<div class="t" style="left:533px;top:153px;width:75px;text-align:center;color:#000;font-size:12px;line-height:16px">0</div>
<div class="t" style="left:608px;top:153px;width:75px;text-align:center;color:#000;font-size:12px;line-height:16px">0</div>
<div class="t" style="left:683px;top:153px;width:75px;text-align:center;color:#000;font-size:12px;line-height:16px">0</div>
<div class="t" style="left:758px;top:153px;width:75px;text-align:center;color:#000;font-size:12px;line-height:16px">0</div>
<div class="t" style="left:833px;top:153px;width:75px;text-align:center;color:#000;font-size:12px;line-height:16px">0</div>
<div class="a" style="left:8px;top:170px;width:836px;height:1px;background:#b97440"></div>
<div class="a" style="left:82px;top:50px;width:1px;height:121px;background:#b97440"></div>
<div class="a" style="left:157px;top:50px;width:1px;height:121px;background:#b97440"></div>
<div class="a" style="left:232px;top:50px;width:1px;height:121px;background:#b97440"></div>
<div class="a" style="left:307px;top:50px;width:1px;height:121px;background:#b97440"></div>
<div class="a" style="left:382px;top:50px;width:1px;height:121px;background:#b97440"></div>
<div class="a" style="left:457px;top:50px;width:1px;height:121px;background:#b97440"></div>
<div class="a" style="left:532px;top:50px;width:1px;height:121px;background:#b97440"></div>
<div class="a" style="left:607px;top:50px;width:1px;height:121px;background:#b97440"></div>
<div class="a" style="left:682px;top:50px;width:1px;height:121px;background:#b97440"></div>
<div class="a" style="left:757px;top:50px;width:1px;height:121px;background:#b97440"></div>
<div class="a" style="left:832px;top:50px;width:1px;height:121px;background:#b97440"></div>
<div class="a" style="left:7px;top:47px;width:836px;height:26px;border:2px solid #c00000;border-top-width:2.5px"></div>
<div class="a" style="left:8px;top:292px;width:836px;height:17px;background:#ececec;border-bottom:1px solid #93a6bd"></div>
<div class="a" style="left:8px;top:292px;width:16px;height:16px;background:#f2f2f2;border:1px solid #aab4c0"></div>
<svg class="a" style="left:14px;top:296px" width="5" height="9"><path d="M5 0V9L0 4.5Z" fill="#111"/></svg>
<div class="a" style="left:828px;top:292px;width:16px;height:16px;background:#f2f2f2;border:1px solid #aab4c0"></div>
<svg class="a" style="left:833px;top:296px" width="5" height="9"><path d="M0 0V9L5 4.5Z" fill="#111"/></svg>
<div class="a" style="left:24px;top:292px;width:746px;height:16px;border:1px solid #f5b30f;border-bottom-color:#f0c040;background:linear-gradient(#f4c3a2,#eeaa80 45%,#eaa070)"></div>
<div class="t" style="left:394px;top:296px;font-size:8px;line-height:8px;color:#7a6a8a;letter-spacing:-0.5px">|||</div>
</div>
<svg class="a" style="left:151px;top:255px" width="210" height="230" viewBox="0 0 210 230">
<path d="M22 129 H87 L91.9 3 L95.2 129 H176 Q198 129 198 151 V199 Q198 221 176 221 H22 Q2 221 2 199 V151 Q2 129 22 129 Z" fill="#fff" stroke="#b40a0a" stroke-width="2" stroke-linejoin="miter"/></svg>
<div class="t" style="left:169px;top:398px;font-size:12px;line-height:16px;color:#444;white-space:normal;width:185px;letter-spacing:0.47px">The line displays the<br><b style="letter-spacing:0.7px">Available</b> and <b style="letter-spacing:0.7px">Reserved</b><br>quantity of the Item at the<br>Sub-Region [<b style="letter-spacing:0.55px">ML EUROPE</b>]</div>
</body></html>
